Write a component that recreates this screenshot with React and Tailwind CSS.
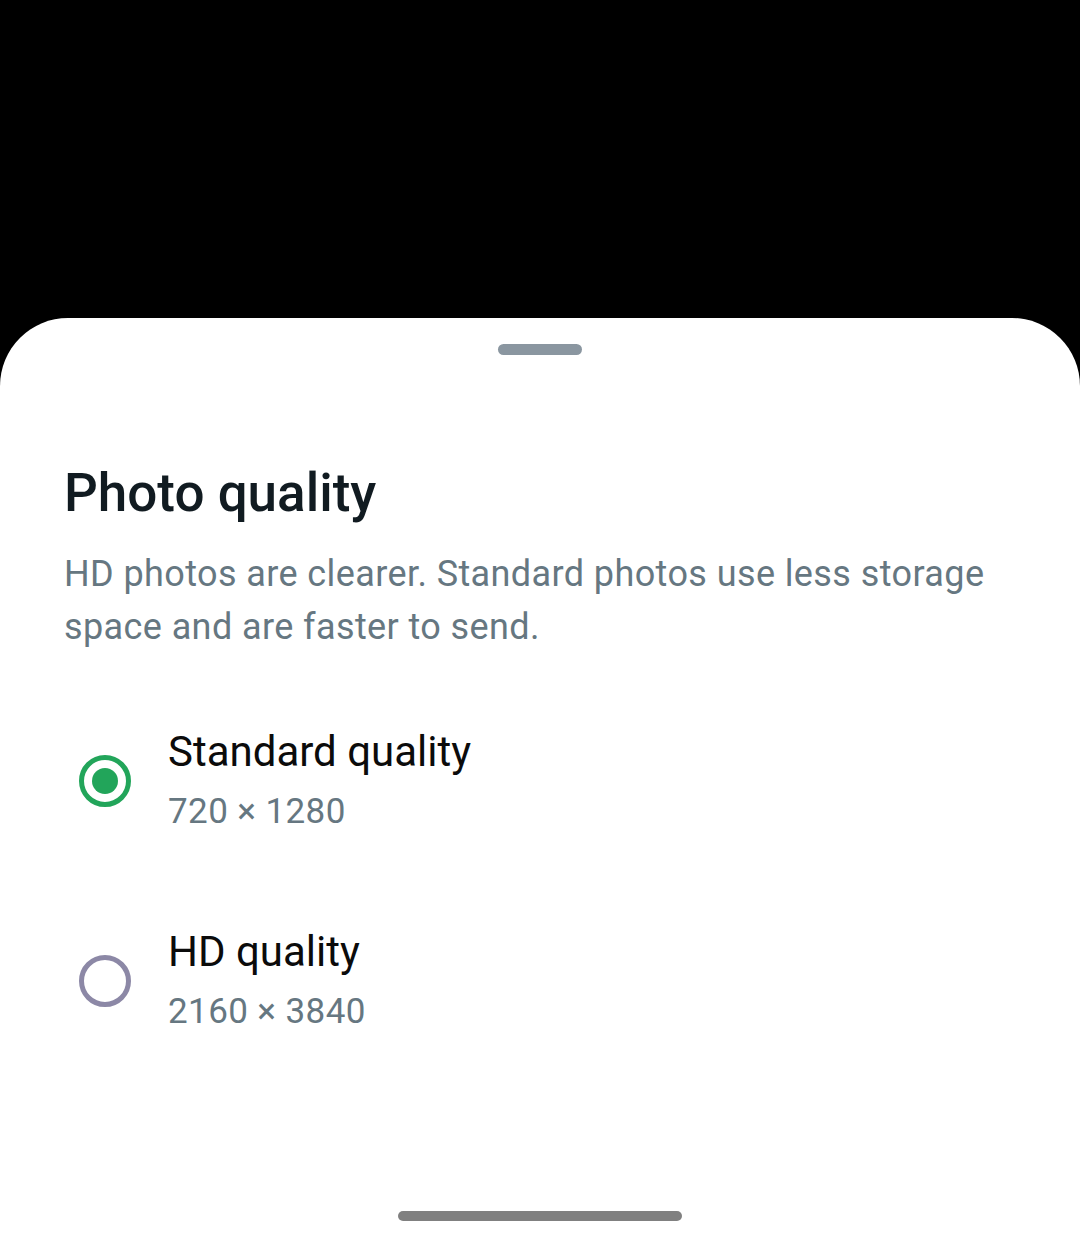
const options = [
  { label: "Standard quality", size: "720 × 1280", selected: true },
  { label: "HD quality", size: "2160 × 3840", selected: false },
];

const Radio = ({ selected }) =>
  selected ? (
    <div className="w-[52px] h-[52px] rounded-full border-[5px] border-[#22a55a] flex items-center justify-center">
      <div className="w-[26px] h-[26px] rounded-full bg-[#22a55a]" />
    </div>
  ) : (
    <div className="w-[52px] h-[52px] rounded-full border-[5px] border-[#8c88a6]" />
  );

export default function App() {
  return (
    <div
      className="w-[1080px] h-[1247px] bg-black flex flex-col overflow-hidden"
      style={{ fontFamily: "Roboto, 'Noto Sans', sans-serif" }}
    >
      <div className="h-[318px] shrink-0" />
      <div className="flex-1 bg-white rounded-t-[68px] flex flex-col">
        <div className="flex justify-center pt-[26px]">
          <div className="w-[84px] h-[11px] rounded-full bg-[#8a96a0]" />
        </div>

        <div className="px-[64px] pt-[106px]">
          <h1 className="text-[53px] leading-[64px] font-medium text-[#111b21]">
            Photo quality
          </h1>
          <p className="mt-[23px] text-[36px] leading-[53px] tracking-[0.4px] text-[#667781]">
            HD photos are clearer. Standard photos use less storage space and
            are faster to send.
          </p>
        </div>

        <div className="flex flex-col mt-[67px] gap-[80px]">
          {options.map((opt) => (
            <div key={opt.label} className="flex items-center pl-[79px]">
              <Radio selected={opt.selected} />
              <div className="ml-[37px] flex flex-col">
                <span className="text-[42px] leading-[62px] text-[#0b0b0b]">
                  {opt.label}
                </span>
                <span className="text-[35px] leading-[58px] tracking-[0.4px] text-[#667781]">
                  {opt.size}
                </span>
              </div>
            </div>
          ))}
        </div>

        <div className="flex-1" />
        <div className="flex justify-center pb-[26px]">
          <div className="w-[284px] h-[10px] rounded-full bg-[#808080]" />
        </div>
      </div>
    </div>
  );
}
